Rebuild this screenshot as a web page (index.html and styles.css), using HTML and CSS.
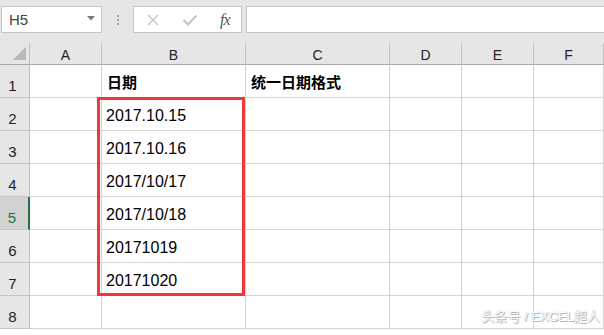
FILE: index.html
```html
<!DOCTYPE html>
<html>
<head>
  <meta charset="utf-8">
  <link rel="stylesheet" href="styles.css">
</head>
<body>

  <div class="toolbar">
    <div class="name-box">
      <span>H5</span>
      <svg class="drop" width="8" height="5" viewBox="0 0 8 5"><path d="M0 0H8L4 4.5Z" fill="#7a7a7a"/></svg>
    </div>
    <div class="grip"><i></i><i></i><i></i></div>
    <div class="fx-buttons">
      <svg width="14" height="12" viewBox="0 0 14 12"><path d="M2 1L12 11M12 1L2 11" stroke="#c4c4c4" stroke-width="1.4" fill="none"/></svg>
      <svg width="16" height="12" viewBox="0 0 16 12"><path d="M1.5 6L6 10.5L14.5 1.5" stroke="#c4c4c4" stroke-width="2.2" fill="none"/></svg>
      <span class="fx">fx</span>
    </div>
    <div class="formula"></div>
  </div>

  <div class="sheet">
    <div class="grid">
      <div class="corner"><i></i></div>
      <div class="col-head">A</div>
      <div class="col-head">B</div>
      <div class="col-head">C</div>
      <div class="col-head">D</div>
      <div class="col-head">E</div>
      <div class="col-head">F</div>

      <div class="row-head">1</div>
      <div class="cell"></div>
      <div class="cell bold">日期</div>
      <div class="cell bold">统一日期格式</div>
      <div class="cell"></div><div class="cell"></div><div class="cell"></div>

      <div class="row-head">2</div>
      <div class="cell"></div>
      <div class="cell">2017.10.15</div>
      <div class="cell"></div><div class="cell"></div><div class="cell"></div><div class="cell"></div>

      <div class="row-head">3</div>
      <div class="cell"></div>
      <div class="cell">2017.10.16</div>
      <div class="cell"></div><div class="cell"></div><div class="cell"></div><div class="cell"></div>

      <div class="row-head">4</div>
      <div class="cell"></div>
      <div class="cell">2017/10/17</div>
      <div class="cell"></div><div class="cell"></div><div class="cell"></div><div class="cell"></div>

      <div class="row-head active">5</div>
      <div class="cell"></div>
      <div class="cell">2017/10/18</div>
      <div class="cell"></div><div class="cell"></div><div class="cell"></div><div class="cell"></div>

      <div class="row-head">6</div>
      <div class="cell"></div>
      <div class="cell">20171019</div>
      <div class="cell"></div><div class="cell"></div><div class="cell"></div><div class="cell"></div>

      <div class="row-head">7</div>
      <div class="cell"></div>
      <div class="cell">20171020</div>
      <div class="cell"></div><div class="cell"></div><div class="cell"></div><div class="cell"></div>

      <div class="row-head">8</div>
      <div class="cell"></div><div class="cell"></div><div class="cell"></div>
      <div class="cell"></div><div class="cell"></div><div class="cell"></div>
    </div>

    <div class="highlight"></div>
    <div class="watermark">头条号 / EXCEL超人</div>
  </div>

</body>
</html>
```

FILE: styles.css
```css
body {
  margin: 0;
  width: 604px;
  height: 335px;
  overflow: hidden;
  background: #fff;
  font-family: "Liberation Sans", "Noto Sans CJK SC", sans-serif;
  color: #000;
}

/* formula bar */
.toolbar {
  height: 43px;
  background: #e6e6e6;
  display: flex;
  align-items: flex-start;
  padding: 6px 0 0 1px;
  box-sizing: border-box;
}
.name-box {
  width: 101px;
  height: 27px;
  box-sizing: border-box;
  border: 1px solid #c6c6c6;
  background: #fff;
  display: flex;
  align-items: center;
  justify-content: space-between;
  padding: 0 6px 0 7px;
  font-size: 15px;
  color: #444;
}
.name-box .drop {
  margin-top: -3px;
}
.grip {
  width: 31px;
  height: 27px;
  display: flex;
  flex-direction: column;
  align-items: center;
  justify-content: center;
  gap: 2px;
}
.grip i {
  width: 2px;
  height: 2px;
  background: #a8a8a8;
}
.fx-buttons {
  width: 109px;
  height: 27px;
  box-sizing: border-box;
  border: 1px solid #c6c6c6;
  background: #fff;
  display: flex;
  align-items: center;
  padding: 0 0 0 12px;
  gap: 22px;
}
.fx-buttons .fx {
  font-family: "Liberation Serif", serif;
  font-style: italic;
  font-size: 16px;
  color: #555;
  letter-spacing: -1px;
}
.formula {
  flex: 1;
  height: 27px;
  margin-left: 4px;
  box-sizing: border-box;
  border: 1px solid #c6c6c6;
  border-right: none;
  background: #fff;
}

/* sheet */
.sheet {
  position: relative;
}
.grid {
  display: grid;
  grid-template-columns: 30px 72px 144px 144px 72px 72px 1fr;
  grid-template-rows: 22px repeat(8, 33px);
}
.corner {
  background: #e6e6e6;
  border-right: 1px solid #c0c0c0;
  border-bottom: 1px solid #ababab;
  position: relative;
}
.corner i {
  position: absolute;
  left: 13px;
  top: 4px;
  width: 0;
  height: 0;
  border-left: 13px solid transparent;
  border-bottom: 13px solid #b8b8b8;
}
.col-head {
  background: #e6e6e6;
  border-right: 1px solid #c0c0c0;
  border-bottom: 1px solid #ababab;
  display: flex;
  align-items: center;
  justify-content: center;
  font-size: 14px;
  color: #222;
  padding-top: 2px;
}
.row-head {
  background: #e6e6e6;
  border-right: 1px solid #c0c0c0;
  border-bottom: 1px solid #c6c6c6;
  display: flex;
  align-items: flex-end;
  justify-content: center;
  padding: 0 4px 3px 0;
  font-size: 15px;
  color: #222;
}
.row-head.active {
  background: #d2d2d2;
  color: #217346;
  border-right: 2px solid #217346;
}
.cell {
  border-right: 1px solid #d4d4d4;
  border-bottom: 1px solid #d4d4d4;
  display: flex;
  align-items: flex-end;
  padding: 0 0 6px 4px;
  font-size: 16px;
  line-height: 16px;
  white-space: nowrap;
}
.cell.bold {
  font-weight: bold;
  font-size: 15px;
  padding-left: 5px;
}

.highlight {
  position: absolute;
  left: 97px;
  top: 54px;
  width: 148px;
  height: 199px;
  box-sizing: border-box;
  border: 3px solid #f33535;
}
.watermark {
  position: absolute;
  right: 4px;
  bottom: 4px;
  font-size: 13px;
  color: #fff;
  text-shadow: 0 0 1px #999, 1px 1px 0 #bbb;
}
```
